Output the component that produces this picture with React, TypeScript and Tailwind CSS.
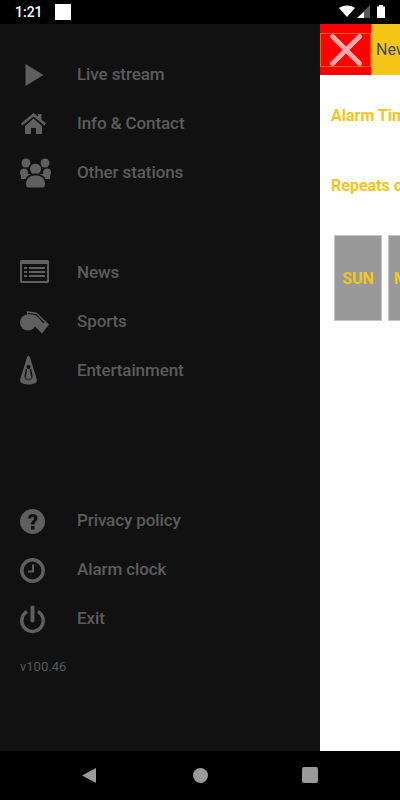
export default function App() {
  const rows1 = [
    { label: 'Live stream', icon: <PlayIcon /> },
    { label: 'Info & Contact', icon: <HomeIcon /> },
    { label: 'Other stations', icon: <GroupIcon /> },
  ]
  const rows2 = [
    { label: 'News', icon: <NewsIcon /> },
    { label: 'Sports', icon: <WhistleIcon /> },
    { label: 'Entertainment', icon: <ConeIcon /> },
  ]
  const rows3 = [
    { label: 'Privacy policy', icon: <HelpIcon /> },
    { label: 'Alarm clock', icon: <ClockIcon /> },
    { label: 'Exit', icon: <PowerIcon /> },
  ]

  return (
    <div className="w-[400px] h-[800px] flex flex-col bg-black overflow-hidden font-['Roboto',sans-serif]">
      {/* status bar */}
      <div className="h-6 shrink-0 flex items-center justify-between bg-black pl-[15px] pr-[15px]">
        <div className="flex items-center">
          <span className="text-white text-sm font-medium leading-none">1:21</span>
          <div className="w-4 h-4 bg-white ml-[12px]" />
        </div>
        <svg width="48" height="16" viewBox="0 0 48 16" fill="none">
          <path d="M2 4 C6 0.5 14 0.5 18 4 L10 13 Z" fill="#fff" />
          <path d="M33 1 V14 H20 Z" fill="#fff" fillOpacity="0.35" />
          <path d="M27 8 V14 H20 Z" fill="#fff" />
          <path d="M40 2.5 H42 V1 H46 V2.5 H48 V14 H40 Z" fill="#fff" />
        </svg>
      </div>

      <div className="flex flex-1 min-h-0">
        {/* drawer */}
        <div className="w-[320px] shrink-0 bg-[#111111] pt-[26px]">
          <MenuGroup rows={rows1} />
          <div className="h-[51px]" />
          <MenuGroup rows={rows2} />
          <div className="h-[101px]" />
          <MenuGroup rows={rows3} />
          <div className="pl-5 mt-[14px] text-[13px] leading-[20px] text-[#5a5a5a]">v100.46</div>
        </div>

        {/* page behind the drawer */}
        <div className="flex-1 bg-white overflow-hidden">
          <div className="w-[400px]">
            <div className="flex h-[51px] bg-[#f5c518]">
              <div className="w-[51px] h-[51px] bg-[#ff0000] flex items-center justify-center">
                <div className="w-[51px] h-[34px] border border-[#ff5a00] flex items-center justify-center">
                  <svg width="34" height="34" viewBox="0 0 34 34">
                    <path d="M3.5 3.5 L30.5 30.5 M30.5 3.5 L3.5 30.5" stroke="#ffaaaa" strokeWidth="5" strokeLinecap="round" />
                  </svg>
                </div>
              </div>
              <span className="ml-[5px] self-center text-[#3b4a6b] text-base">New Alarm</span>
            </div>
            <div className="pl-[11px] pt-[31px] text-[#f5c518] text-base font-bold leading-[20px]">Alarm Time</div>
            <div className="pl-[11px] pt-[50px] text-[#f5c518] text-base font-bold leading-[20px]">Repeats on</div>
            <div className="flex gap-[6px] pl-[14px] pt-[39px]">
              {['SUN', 'MON', 'TUE', 'WED'].map((d) => (
                <div key={d} className="w-[48px] h-[86px] shrink-0 bg-[#999999] border border-[#c4c4c4] pt-[2px] flex items-center justify-center text-[#f5c518] text-base font-bold">
                  {d}
                </div>
              ))}
            </div>
          </div>
        </div>
      </div>

      {/* nav bar */}
      <div className="h-[49px] shrink-0 bg-black flex items-center pl-[81px] pb-[1px]">
        <svg width="16" height="17" viewBox="0 0 16 17"><path d="M15 1 V16 L1 8.5 Z" fill="#9a9a9a" /></svg>
        <div className="w-[15px] h-[15px] rounded-full bg-[#9a9a9a] ml-[96px]" />
        <div className="w-4 h-4 rounded-[2px] bg-[#9a9a9a] ml-[94px]" />
      </div>
    </div>
  )
}

function MenuGroup({ rows }: { rows: { label: string; icon: React.ReactNode }[] }) {
  return (
    <div className="flex flex-col">
      {rows.map((r) => (
        <div key={r.label} className="h-[49px] flex items-center">
          <div className="w-[77px] pl-[20px] shrink-0 flex items-center">{r.icon}</div>
          <span className="text-[#5c5c5c] text-[17px] font-medium tracking-[-0.1px]">{r.label}</span>
        </div>
      ))}
    </div>
  )
}

// all drawer icons share a 32x30 box centred on the row
function Icon({ children }: { children: React.ReactNode }) {
  return (
    <svg width="32" height="30" viewBox="0 0 32 30" fill="#5f5f5f">
      {children}
    </svg>
  )
}

function PlayIcon() {
  return <Icon><path d="M5.5 4 L23.5 15 L5.5 26 Z" /></Icon>
}

function HomeIcon() {
  return (
    <Icon>
      <path d="M1 14.5 L13.5 4 L18 7.5 V5 H21.5 V10.5 L26 14.5 L24.5 16.5 L13.5 7.5 L2.5 16.5 Z" />
      <path d="M5 17 L13.5 9.5 L22 17 V25 H16 V19 H11 V25 H5 Z" />
    </Icon>
  )
}

function GroupIcon() {
  return (
    <Icon>
      <circle cx="6" cy="5" r="4.5" />
      <circle cx="25" cy="5" r="4.5" />
      <circle cx="4" cy="14.5" r="4" />
      <circle cx="27" cy="14.5" r="4" />
      <path d="M1 16 H30 V21 H1 Z" />
      <circle cx="15.5" cy="11" r="7" fill="#111111" />
      <circle cx="15.5" cy="11" r="5.5" />
      <path d="M4.5 27 C4.5 19 9 15.5 15.5 15.5 C22 15.5 26.5 19 26.5 27 C26.5 29 25.5 30 23.5 30 H7.5 C5.5 30 4.5 29 4.5 27 Z" fill="#111111" />
      <path d="M6 26 C6 20 10 17.5 15.5 17.5 C21 17.5 25 20 25 26 C25 28.5 24 29.5 22.5 29.5 H8.5 C7 29.5 6 28.5 6 26 Z" />
    </Icon>
  )
}

function NewsIcon() {
  return (
    <Icon>
      <path fillRule="evenodd" d="M2 2 H27 C28.5 2 29 2.5 29 4 V23 C29 24.5 28.5 25 27 25 H2 C0.5 25 0 24.5 0 23 V4 C0 2.5 0.5 2 2 2 Z M2 6 V23 H27 V6 Z" />
      <path d="M4 9 H7 V11 H4 Z M9 9 H25 V11 H9 Z M4 13 H7 V15 H4 Z M9 13 H25 V15 H9 Z M4 17 H7 V19 H4 Z M9 17 H25 V19 H9 Z" />
    </Icon>
  )
}

function WhistleIcon() {
  return (
    <Icon>
      <circle cx="8" cy="15.5" r="8" />
      <path d="M6.5 4 L16.5 5.5 L29 17.5 L22 26.5 L14.5 19 L8 10 Z" />
      <path d="M8 6.5 L16 7.5 L24 16" stroke="#111111" strokeWidth="1.2" fill="none" />
    </Icon>
  )
}

function ConeIcon() {
  return (
    <Icon>
      <path d="M8.5 0 C9.5 0 10 1 10.5 3 L17 24 C17 27 13 28.5 8.5 28.5 C4 28.5 0 27 0 24 L6.5 3 C7 1 7.500 0 8.5 0 Z" />
      <circle cx="8.5" cy="11" r="2" fill="#111111" />
      <path d="M6.5 13 L5 21 M10.5 13 L12 21" stroke="#111111" strokeWidth="1.5" fill="none" />
      <path d="M5 21 C6 24.5 11 24.5 12 21" stroke="#3a3a3a" strokeWidth="1.5" fill="none" />
    </Icon>
  )
}

function HelpIcon() {
  return (
    <Icon>
      <circle cx="12.5" cy="15.5" r="12.5" />
      <path d="M8 12.5 C8 9.5 10 8 12.5 8 C15.5 8 17.5 9.5 17.5 12 C17.5 15.5 14.5 15.5 14.5 18.5 H11 C11 14.5 14 14.5 14 12.5 C14 11.5 13.5 11 12.5 11 C11.5 11 11 11.5 11 12.5 Z" fill="#111111" />
      <rect x="11" y="20" width="3.5" height="3.5" fill="#111111" />
    </Icon>
  )
}

function ClockIcon() {
  return (
    <Icon>
      <circle cx="12.5" cy="15.5" r="10.7" fill="none" stroke="#5f5f5f" strokeWidth="3.5" />
      <path d="M13 9.5 V16.5 H8" fill="none" stroke="#5f5f5f" strokeWidth="2" />
    </Icon>
  )
}

function PowerIcon() {
  return (
    <Icon>
      <path d="M7 7.5 A10.7 10.7 0 1 0 18 7.5" fill="none" stroke="#5f5f5f" strokeWidth="3.5" />
      <path d="M12.5 3.5 V16.5" fill="none" stroke="#5f5f5f" strokeWidth="4" strokeLinecap="round" />
    </Icon>
  )
}
